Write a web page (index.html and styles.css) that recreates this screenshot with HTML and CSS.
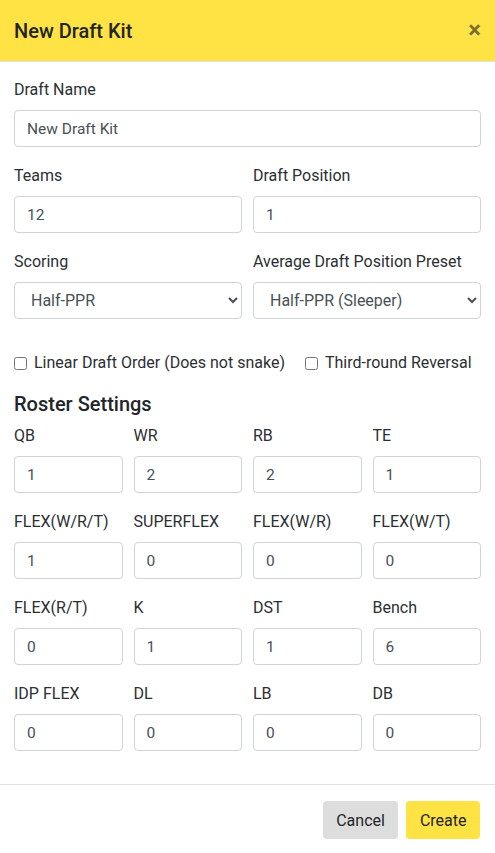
FILE: index.html
```html
<!DOCTYPE html>
<html>
<head>
<meta charset="utf-8">
<link rel="stylesheet" href="styles.css">
</head>
<body>
<div class="modal">
  <div class="modal-header">
    <h1 class="modal-title">New Draft Kit</h1>
    <button class="close" type="button">&times;</button>
  </div>
  <div class="modal-body">
    <div class="group">
      <label class="label">Draft Name</label>
      <input class="control" type="text" value="New Draft Kit">
    </div>
    <div class="row2">
      <div class="group">
        <label class="label">Teams</label>
        <input class="control" type="text" value="12">
      </div>
      <div class="group">
        <label class="label">Draft Position</label>
        <input class="control" type="text" value="1">
      </div>
    </div>
    <div class="row2">
      <div class="group">
        <label class="label">Scoring</label>
        <select class="control select"><option>Half-PPR</option></select>
      </div>
      <div class="group">
        <label class="label">Average Draft Position Preset</label>
        <select class="control select"><option>Half-PPR (Sleeper)</option></select>
      </div>
    </div>
    <div class="checks">
      <label class="check"><input type="checkbox" class="box"><span>Linear Draft Order (Does not snake)</span></label>
      <label class="check"><input type="checkbox" class="box"><span>Third-round Reversal</span></label>
    </div>
    <h2 class="section-title">Roster Settings</h2>
    <div class="row4">
      <div class="group"><label class="label">QB</label><input class="control" type="text" value="1"></div>
      <div class="group"><label class="label">WR</label><input class="control" type="text" value="2"></div>
      <div class="group"><label class="label">RB</label><input class="control" type="text" value="2"></div>
      <div class="group"><label class="label">TE</label><input class="control" type="text" value="1"></div>
      <div class="group"><label class="label">FLEX(W/R/T)</label><input class="control" type="text" value="1"></div>
      <div class="group"><label class="label">SUPERFLEX</label><input class="control" type="text" value="0"></div>
      <div class="group"><label class="label">FLEX(W/R)</label><input class="control" type="text" value="0"></div>
      <div class="group"><label class="label">FLEX(W/T)</label><input class="control" type="text" value="0"></div>
      <div class="group"><label class="label">FLEX(R/T)</label><input class="control" type="text" value="0"></div>
      <div class="group"><label class="label">K</label><input class="control" type="text" value="1"></div>
      <div class="group"><label class="label">DST</label><input class="control" type="text" value="1"></div>
      <div class="group"><label class="label">Bench</label><input class="control" type="text" value="6"></div>
      <div class="group"><label class="label">IDP FLEX</label><input class="control" type="text" value="0"></div>
      <div class="group"><label class="label">DL</label><input class="control" type="text" value="0"></div>
      <div class="group"><label class="label">LB</label><input class="control" type="text" value="0"></div>
      <div class="group"><label class="label">DB</label><input class="control" type="text" value="0"></div>
    </div>
  </div>
  <div class="modal-footer">
    <button class="btn btn-cancel" type="button">Cancel</button>
    <button class="btn btn-create" type="button">Create</button>
  </div>
</div>
</body>
</html>
```
FILE: styles.css
```css
* { box-sizing: border-box; }
html, body { margin: 0; padding: 0; background: #fff; }
body {
  font-family: Roboto, "Liberation Sans", sans-serif;
  color: #212529;
  font-size: 16px;
}
.modal { width: 495px; }
.modal-header {
  height: 62px;
  background: #ffe243;
  border-bottom: 1px solid #dee2e6;
  display: flex;
  align-items: center;
  justify-content: space-between;
  padding: 0 14px;
}
.modal-title {
  margin: 0;
  font-size: 20px;
  font-weight: 500;
  line-height: 24px;
  color: #212529;
}
.close {
  background: none;
  border: 0;
  padding: 0;
  font-family: Roboto, "Liberation Sans", sans-serif;
  font-size: 24px;
  font-weight: 700;
  line-height: 1;
  color: #000;
  opacity: .5;
  text-shadow: 0 1px 0 #fff;
  margin-top: -2px;
}
.modal-body { padding: 16px 14px 16px; }
.group { margin-bottom: 17px; }
.label {
  display: block;
  line-height: 22px;
  padding-top: 1px;
  margin-bottom: 9px;
  font-size: 16px;
  font-weight: 400;
  color: #2b2f33;
}
.control {
  display: block;
  width: 100%;
  height: 37px;
  border: 1px solid #ced4da;
  border-radius: 4px;
  padding: 0 12px;
  font-family: Roboto, "Liberation Sans", sans-serif;
  font-size: 15.5px;
  color: #495057;
  background: #fff;
}
.select { padding: 0 8px 0 12px; font-size: 16px; }
.row2 {
  display: grid;
  grid-template-columns: 1fr 1fr;
  column-gap: 11px;
}
.row4 {
  display: grid;
  grid-template-columns: repeat(4, 1fr);
  column-gap: 11px;
}
.checks {
  display: flex;
  gap: 20px;
  padding-top: 16px;
  height: 38px;
  align-items: center;
}
.check {
  display: flex;
  align-items: center;
  gap: 7px;
  line-height: 22px;
  color: #2b2f33;
}
.box { margin: 0; width: 13px; height: 13px; }
.section-title {
  margin: 17px 0 7px;
  font-size: 20px;
  font-weight: 500;
  line-height: 26px;
}
.modal-footer {
  border-top: 1px solid #dee2e6;
  display: flex;
  justify-content: flex-end;
  gap: 8px;
  padding: 16px 15px;
}
.btn {
  height: 38px;
  border: 0;
  border-radius: 4px;
  padding: 0 13.5px;
  font-family: Roboto, "Liberation Sans", sans-serif;
  font-size: 16px;
  color: #212529;
}
.btn-cancel { background: #dddddd; }
.btn-create { background: #ffe243; }
```
